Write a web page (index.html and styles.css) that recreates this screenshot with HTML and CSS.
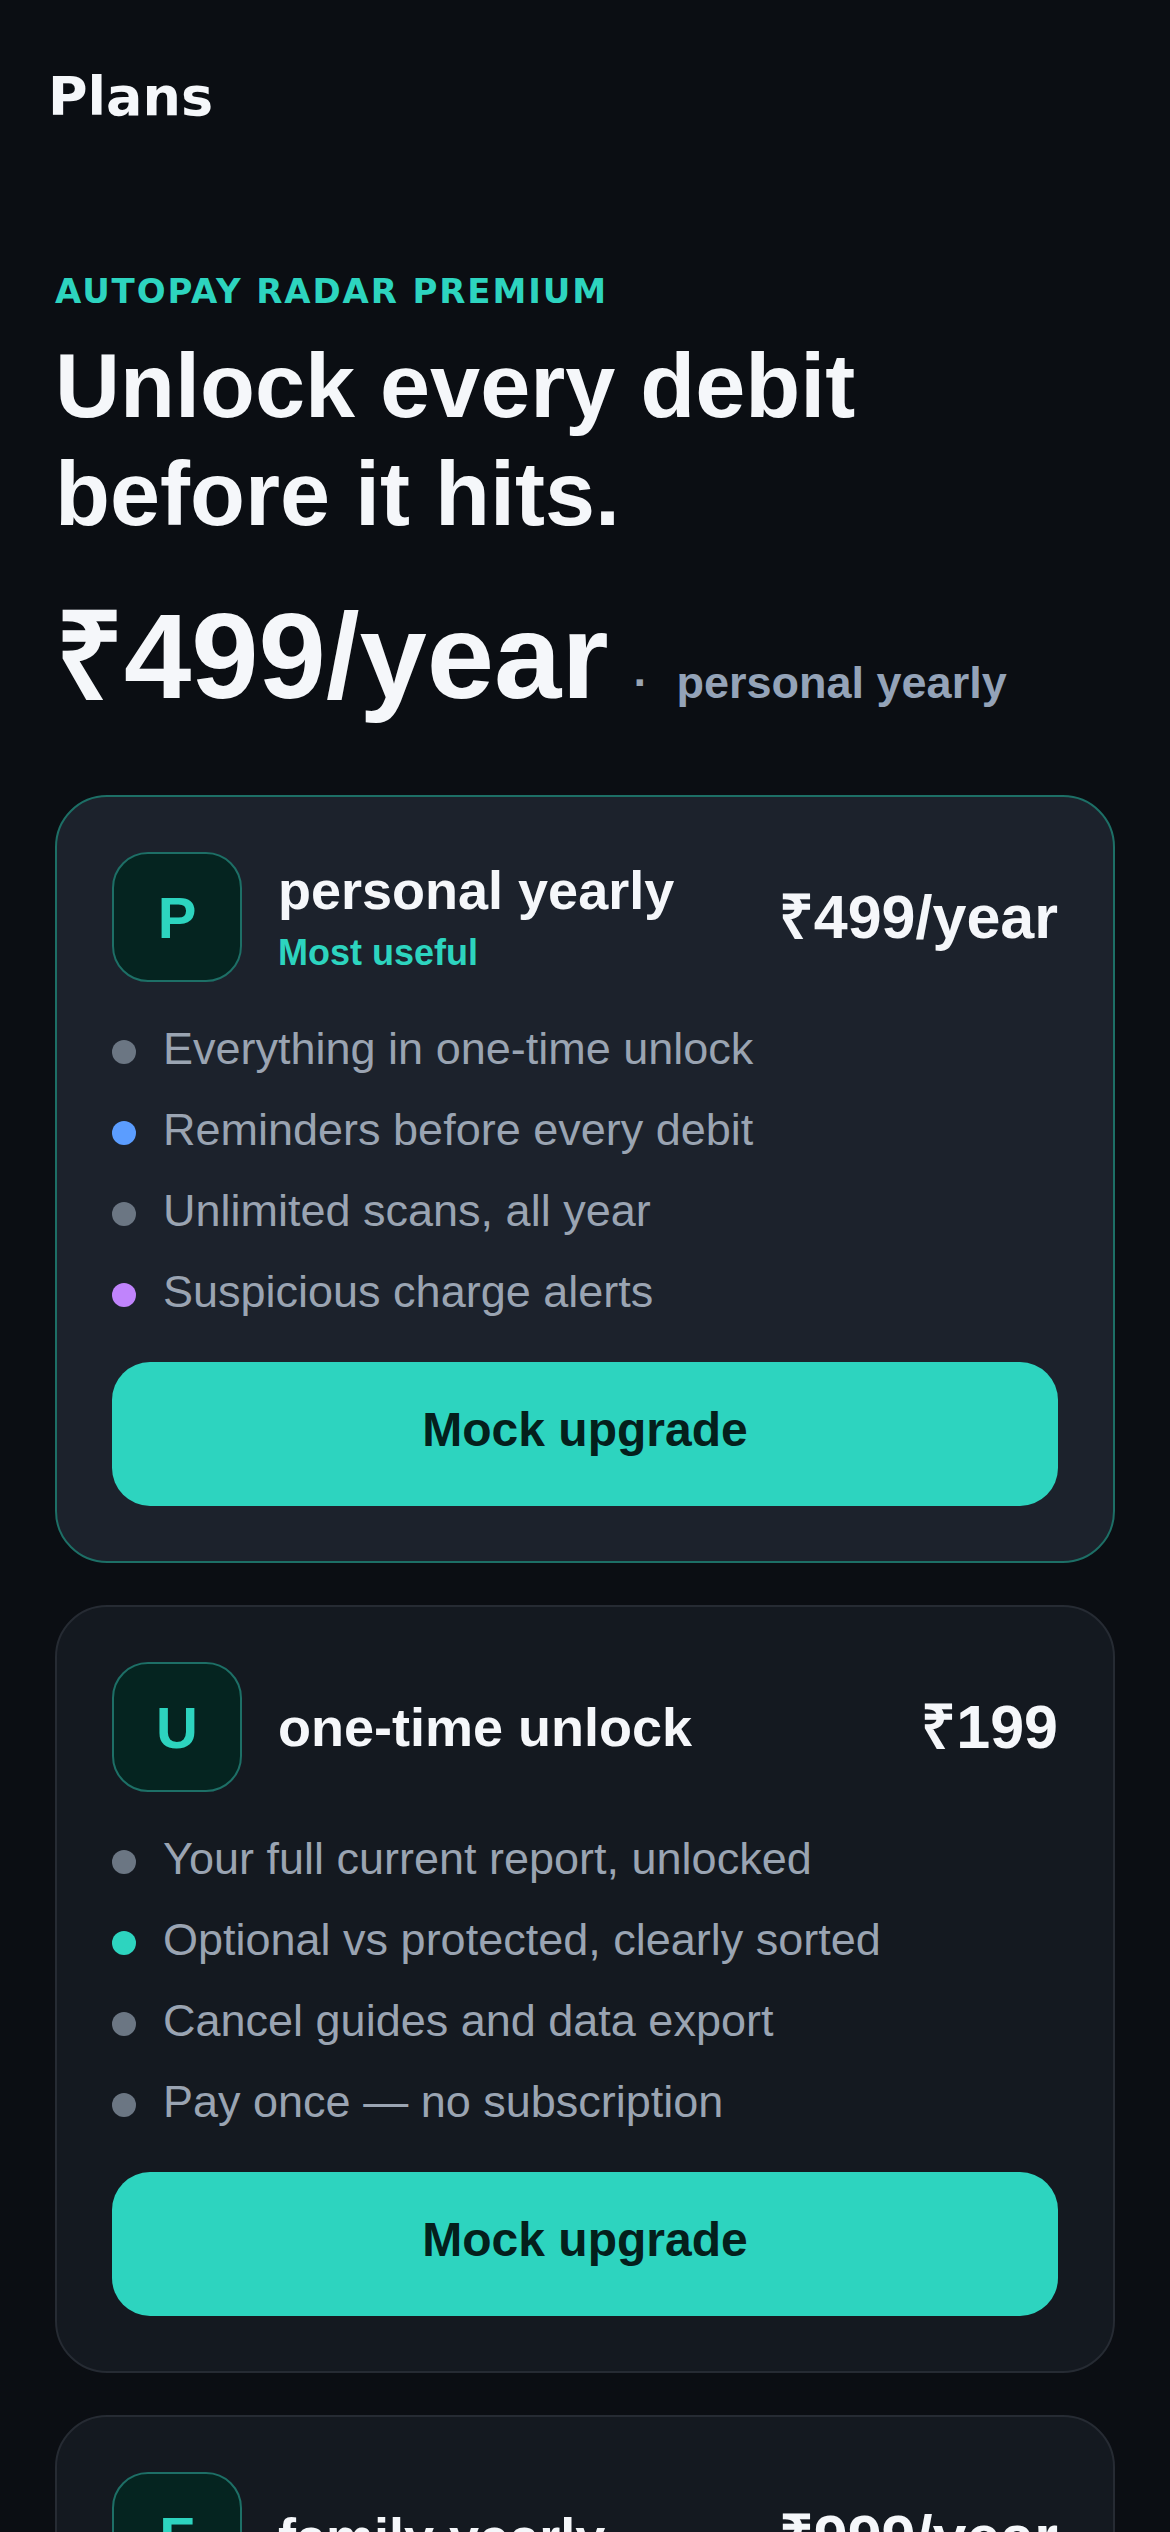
FILE: index.html
```html
<!DOCTYPE html>
<html lang="en">
<head>
<meta charset="utf-8">
<title>Plans</title>
<link rel="stylesheet" href="styles.css">
</head>
<body>
<header class="topbar">
  <h1 class="topbar-title">Plans</h1>
</header>
<main class="page">
  <section class="hero">
    <p class="eyebrow">AUTOPAY RADAR PREMIUM</p>
    <h2 class="headline">Unlock every debit before it hits.</h2>
    <div class="price-row">
      <span class="price-big">₹499/year</span>
      <span class="price-sep">·</span>
      <span class="price-plan">personal yearly</span>
    </div>
  </section>

  <section class="plans">
    <article class="plan plan-featured">
      <div class="plan-head">
        <div class="plan-icon">P</div>
        <div class="plan-titles">
          <div class="plan-name">personal yearly</div>
          <div class="plan-tag">Most useful</div>
        </div>
        <div class="plan-price">₹499/year</div>
      </div>
      <ul class="features">
        <li class="feature"><span class="dot dot-gray"></span><span>Everything in one-time unlock</span></li>
        <li class="feature"><span class="dot dot-blue"></span><span>Reminders before every debit</span></li>
        <li class="feature"><span class="dot dot-gray"></span><span>Unlimited scans, all year</span></li>
        <li class="feature"><span class="dot dot-purple"></span><span>Suspicious charge alerts</span></li>
      </ul>
      <button class="cta" type="button">Mock upgrade</button>
    </article>

    <article class="plan">
      <div class="plan-head">
        <div class="plan-icon">U</div>
        <div class="plan-titles">
          <div class="plan-name">one-time unlock</div>
        </div>
        <div class="plan-price">₹199</div>
      </div>
      <ul class="features">
        <li class="feature"><span class="dot dot-gray"></span><span>Your full current report, unlocked</span></li>
        <li class="feature"><span class="dot dot-teal"></span><span>Optional vs protected, clearly sorted</span></li>
        <li class="feature"><span class="dot dot-gray"></span><span>Cancel guides and data export</span></li>
        <li class="feature"><span class="dot dot-gray"></span><span>Pay once — no subscription</span></li>
      </ul>
      <button class="cta" type="button">Mock upgrade</button>
    </article>

    <article class="plan">
      <div class="plan-head">
        <div class="plan-icon">F</div>
        <div class="plan-titles">
          <div class="plan-name">family yearly</div>
        </div>
        <div class="plan-price">₹999/year</div>
      </div>
      <ul class="features">
        <li class="feature"><span class="dot dot-gray"></span><span>Everything in personal yearly</span></li>
        <li class="feature"><span class="dot dot-blue"></span><span>Up to 5 family members</span></li>
        <li class="feature"><span class="dot dot-gray"></span><span>Shared household view</span></li>
        <li class="feature"><span class="dot dot-purple"></span><span>Alerts for every member</span></li>
      </ul>
      <button class="cta" type="button">Mock upgrade</button>
    </article>
  </section>
</main>
</body>
</html>
```
FILE: styles.css
```css
* {
  box-sizing: border-box;
}

html, body {
  margin: 0;
  padding: 0;
  background: #0b0e13;
}

body {
  font-family: "Liberation Sans", Arial, sans-serif;
  color: #f5f7fa;
}

.topbar {
  padding: 64px 48px 0;
}

.topbar-title {
  margin: 0;
  font-family: "DejaVu Sans", sans-serif;
  font-weight: 700;
  font-size: 54px;
  line-height: 66px;
  color: #f5f7fa;
}

.page {
  padding: 0 55px 80px;
}

.hero {
  margin-top: 141px;
}

.eyebrow {
  margin: 0;
  font-family: "DejaVu Sans", sans-serif;
  font-weight: 700;
  font-size: 34px;
  line-height: 40px;
  letter-spacing: 0.055em;
  color: #2dd4bf;
}

.headline {
  margin: 21px 0 0;
  font-weight: 700;
  font-size: 90px;
  line-height: 108px;
  color: #f5f7fa;
}

.price-row {
  margin-top: 42px;
  display: flex;
  align-items: baseline;
}

.price-big {
  font-weight: 700;
  font-size: 121px;
  line-height: 132px;
  color: #f5f7fa;
}

.price-sep {
  margin-left: 25px;
  font-weight: 700;
  font-size: 45px;
  color: #9aa4b2;
}

.price-plan {
  margin-left: 28px;
  font-weight: 700;
  font-size: 45px;
  color: #94a3b8;
}

.plans {
  margin-top: 73px;
  display: flex;
  flex-direction: column;
  gap: 42px;
}

.plan {
  background: #141920;
  border: 2px solid #262b33;
  border-radius: 52px;
  padding: 55px;
}

.plan-featured {
  background: #1c222c;
  border-color: #1d6f66;
}

.plan-head {
  display: flex;
  align-items: center;
  gap: 36px;
}

.plan-icon {
  flex: none;
  width: 130px;
  height: 130px;
  border-radius: 36px;
  border: 2px solid #1d6f66;
  background: #052420;
  color: #2dd4bf;
  font-weight: 700;
  font-size: 58px;
  display: flex;
  align-items: center;
  justify-content: center;
}

.plan-titles {
  flex: 1;
  min-width: 0;
}

.plan-name {
  font-weight: 700;
  font-size: 54px;
  line-height: 62px;
  color: #f5f7fa;
}

.plan-tag {
  margin-top: 10px;
  font-weight: 700;
  font-size: 36px;
  line-height: 44px;
  color: #2dd4bf;
}

.plan-price {
  flex: none;
  font-weight: 700;
  font-size: 61px;
  line-height: 70px;
  color: #f5f7fa;
}

.features {
  list-style: none;
  margin: 40px 0 0;
  padding: 0;
  display: flex;
  flex-direction: column;
  gap: 27px;
}

.feature {
  display: flex;
  align-items: center;
  gap: 27px;
  font-size: 45px;
  line-height: 54px;
  color: #9aa4b2;
}

.dot {
  flex: none;
  width: 24px;
  height: 24px;
  margin-top: 6px;
  border-radius: 50%;
  background: #6b7683;
}

.dot-blue {
  background: #5b9dff;
}

.dot-purple {
  background: #c084fc;
}

.dot-teal {
  background: #2dd4bf;
}

.cta {
  display: block;
  width: 100%;
  height: 144px;
  margin-top: 43px;
  padding: 0 0 10px;
  border: none;
  border-radius: 38px;
  background: #2dd4bf;
  color: #04201c;
  font-family: "Liberation Sans", Arial, sans-serif;
  font-weight: 700;
  font-size: 48px;
}
```
